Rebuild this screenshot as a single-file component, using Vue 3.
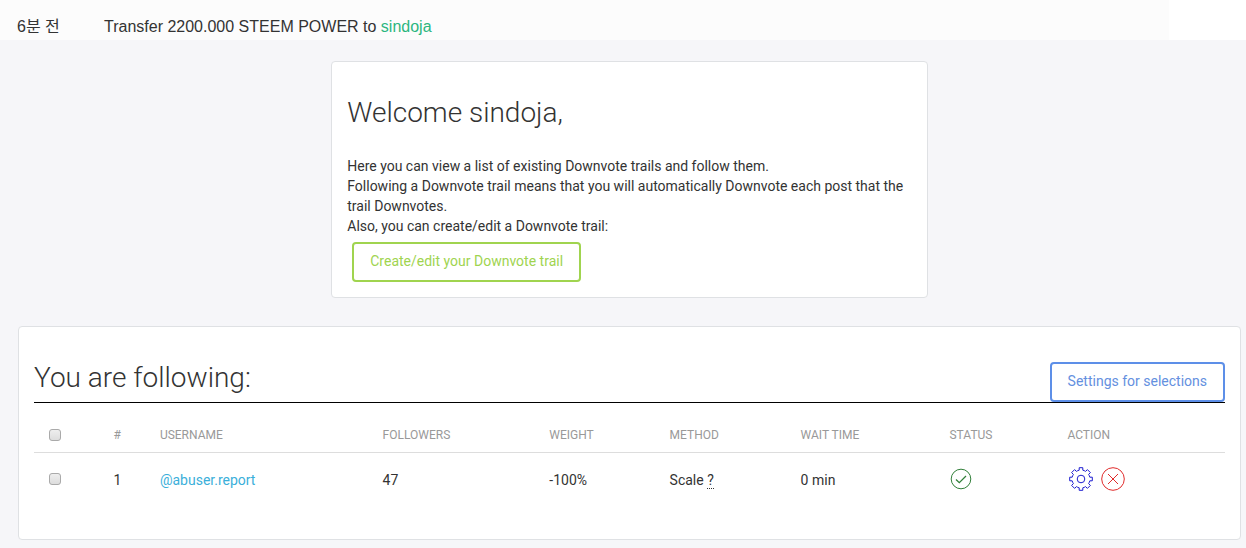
<script setup>
import { ref } from 'vue'

const trails = ref([
  { name: 'abuser.report', followers: 47, weight: '-100%', method: 'Scale', wait: '0 min', selected: false },
])
const allSelected = ref(false)

function toggleAll() {
  trails.value.forEach((trail) => { trail.selected = allSelected.value })
}
</script>

<template>
  <div class="page">
    <header class="notice">
      <div class="notice-row">
        <span class="time">6분 전</span>
        <span>Transfer 2200.000 STEEM POWER to <a href="#sindoja">sindoja</a></span>
      </div>
    </header>

    <main class="content">
      <section class="card welcome">
        <h2>Welcome sindoja,</h2>
        <p>
          Here you can view a list of existing Downvote trails and follow them.<br>
          Following a Downvote trail means that you will automatically Downvote each post that the trail Downvotes.<br>
          Also, you can create/edit a Downvote trail:
        </p>
        <button type="button" class="btn green">Create/edit your Downvote trail</button>
      </section>

      <section class="card following">
        <div class="heading">
          <h2>You are following:</h2>
          <button type="button" class="btn blue">Settings for selections</button>
        </div>
        <table>
          <colgroup>
            <col class="c-check"><col class="c-num"><col class="c-user"><col class="c-followers">
            <col class="c-weight"><col class="c-method"><col class="c-wait"><col class="c-status"><col class="c-action">
          </colgroup>
          <thead>
            <tr>
              <th class="check"><input v-model="allSelected" type="checkbox" aria-label="Select all trails" @change="toggleAll"></th>
              <th>#</th>
              <th>USERNAME</th>
              <th>FOLLOWERS</th>
              <th>WEIGHT</th>
              <th>METHOD</th>
              <th>WAIT TIME</th>
              <th>STATUS</th>
              <th>ACTION</th>
            </tr>
          </thead>
          <tbody>
            <tr v-for="(trail, i) in trails" :key="trail.name">
              <td class="check raised"><input v-model="trail.selected" type="checkbox" :aria-label="`Select ${trail.name}`"></td>
              <td>{{ i + 1 }}</td>
              <td><a href="#trail">@{{ trail.name }}</a></td>
              <td>{{ trail.followers }}</td>
              <td>{{ trail.weight }}</td>
              <td>{{ trail.method }} <abbr>?</abbr></td>
              <td>{{ trail.wait }}</td>
              <td class="raised">
                <svg class="icon status" viewBox="0 0 24 24" role="img" aria-label="Active">
                  <circle cx="12" cy="12" r="9.8" />
                  <path class="tick" d="M7 12.5l3.3 3.2L17 9" />
                </svg>
              </td>
              <td class="raised">
                <div class="actions">
                  <button type="button" aria-label="Settings">
                    <svg class="icon gear" viewBox="0 0 24 24">
                      <path d="M10.2 .7h3.6v2.5q1.5 .3 2.8 1.2l1.8-1.8 3 3-1.8 1.8q.9 1.3 1.2 2.8h2.5v3.6h-2.5q-.3 1.5-1.2 2.8l1.8 1.8-3 3-1.8-1.8q-1.3 .9-2.8 1.2v2.5h-3.6v-2.5q-1.5-.3-2.8-1.2l-1.8 1.8-3-3 1.8-1.8q-.9-1.3-1.2-2.8H.7v-3.6h2.5q.3-1.5 1.2-2.8L2.6 5.6l3-3 1.8 1.8q1.3-.9 2.8-1.2z" />
                      <circle cx="12" cy="12" r="3.8" />
                    </svg>
                  </button>
                  <button type="button" aria-label="Unfollow">
                    <svg class="icon remove" viewBox="0 0 24 24">
                      <circle cx="12" cy="12" r="11.3" />
                      <path d="M7 7l10 10M17 7L7 17" />
                    </svg>
                  </button>
                </div>
              </td>
            </tr>
          </tbody>
        </table>
      </section>
    </main>
  </div>
</template>

<style>
body {
  background: #f6f6f9;
}
</style>

<style scoped>
.page {
  font: 14px/20px Roboto, sans-serif;
  color: #333;
}
.notice {
  background: #fff;
  padding-right: 77px;
}
.notice-row {
  display: flex;
  padding: 17px 17px 3px;
  background: #fcfcfc;
  font: 16px/20px "Liberation Sans", "Noto Sans CJK KR", sans-serif;
}
.time {
  width: 87px;
}
.notice a {
  color: #2cb67f;
}
a {
  color: #3bafda;
  text-decoration: none;
}
.content {
  display: flex;
  flex-direction: column;
  align-items: center;
  gap: 28px;
  padding: 21px 5px 8px 18px;
}
.card {
  box-sizing: border-box;
  padding: 15px;
  background: #fff;
  border: 1px solid #dfe1e4;
  border-radius: 4px;
}
.welcome {
  width: calc(50% - 15px);
}
.following {
  width: 100%;
  padding-bottom: 33px;
}
h2 {
  margin: 0;
  font-size: 28px;
  font-weight: 300;
  line-height: 34px;
}
.welcome h2 {
  padding: 19px 0 26px;
}
p {
  margin: 0;
}
.btn {
  height: 40px;
  padding: 0 16px 2px;
  border: 2px solid;
  border-radius: 4px;
  background: transparent;
  font: 14px/20px Roboto, sans-serif;
}
.green {
  display: block;
  margin: 6px 0 0 5px;
  border-color: #a0d44f;
  color: #a0d44f;
}
.blue {
  border-color: #5d8fe8;
  color: #6490e0;
}
.heading {
  display: flex;
  align-items: flex-end;
  justify-content: space-between;
  padding-top: 19px;
  border-bottom: 1px solid #000;
}
.heading h2 {
  padding-bottom: 7px;
}
table {
  width: 100%;
  table-layout: fixed;
  border-collapse: collapse;
}
.c-check { width: 6%; }
.c-num { width: 3.9%; }
.c-user { width: 18.7%; }
.c-followers { width: 14%; }
.c-weight { width: 10.1%; }
.c-method { width: 11%; }
.c-wait { width: 12.5%; }
.c-status { width: 9.9%; }
.c-action { width: 13.9%; }
th, td {
  padding: 0 8px;
  text-align: left;
  vertical-align: middle;
}
th {
  height: 49px;
  padding-top: 20px;
  padding-bottom: 4px;
  box-sizing: border-box;
  border-bottom: 1px solid #ddd;
  color: #999;
  font-size: 12px;
  font-weight: 400;
}
td {
  box-sizing: border-box;
  height: 54px;
  padding-top: 2px;
}
.raised {
  padding-bottom: 2px;
}
.check {
  padding-left: 15px;
}
input {
  display: block;
  appearance: none;
  box-sizing: border-box;
  width: 12px;
  height: 12px;
  margin: 0;
  border: 1px solid #aaa;
  border-radius: 3px;
  background: linear-gradient(#eee, #ddd);
}
input:checked {
  background: #3bafda;
}
abbr {
  text-decoration: underline dotted 1px;
  text-underline-offset: 3px;
  border-bottom: 1px dotted #333;
}
.icon {
  display: block;
  width: 24px;
  height: 24px;
  fill: none;
  stroke-width: 1;
}
.status {
  stroke: #32803a;
}
.tick {
  stroke-width: 1.3;
}
.gear {
  stroke: #1c1cd0;
}
.remove {
  stroke: #e02b2b;
}
.actions {
  display: flex;
  gap: 8px;
  padding-left: 2px;
}
.actions button {
  padding: 0;
  border: 0;
  background: none;
}
</style>
